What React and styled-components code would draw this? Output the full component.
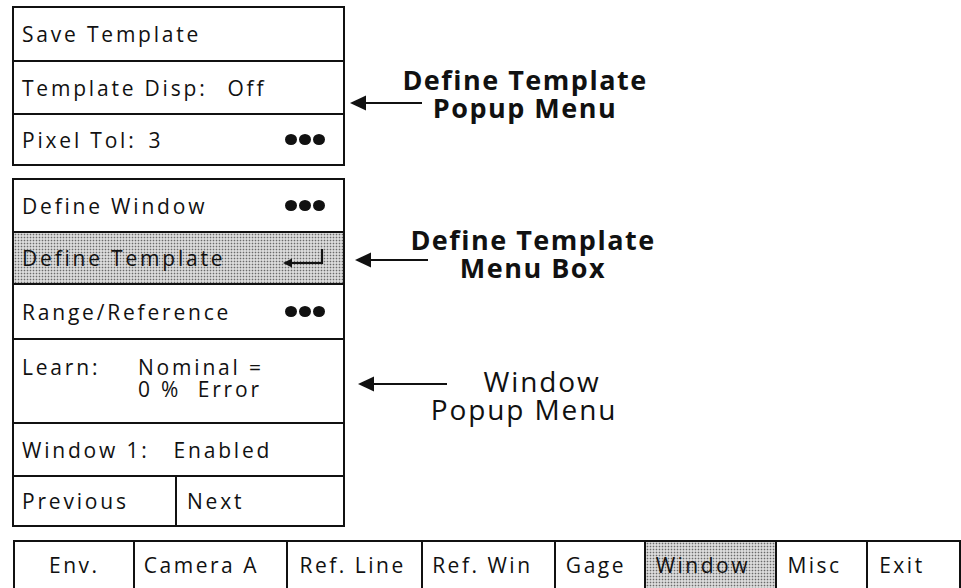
import React from "react";
import styled, { createGlobalStyle } from "styled-components";

const GlobalStyle = createGlobalStyle`
  html, body {
    margin: 0;
    padding: 0;
    background: #fff;
  }
  body {
    font-family: "Open Sans", "Noto Sans", sans-serif;
    color: #111;
  }
`;

const shade = `
  background-color: #dadada;
  background-image: radial-gradient(circle, #6a6a6a 0.7px, transparent 1.1px);
  background-size: 3px 3px;
`;

const Page = styled.div`
  width: 961px;
  height: 588px;
  overflow: hidden;
  display: flex;
  flex-direction: column;
  padding: 6px 0 0 12px;
  box-sizing: border-box;
`;

const Main = styled.div`
  display: flex;
`;

const MenuColumn = styled.div`
  width: 333px;
  display: flex;
  flex-direction: column;
  gap: 12px;
`;

const MenuBox = styled.div`
  border: 2px solid #111;
  display: flex;
  flex-direction: column;
`;

const Row = styled.div`
  height: ${(p) => p.$h}px;
  box-sizing: border-box;
  display: flex;
  align-items: center;
  justify-content: space-between;
  padding: 0 18px 0 8px;
  font-size: 21px;
  font-weight: 500;
  letter-spacing: 2.8px;
  white-space: pre;
  & + & {
    border-top: 2px solid #111;
  }
  ${(p) => p.$shaded && shade}
`;

const Field = styled.span`
  display: flex;
`;

const Value = styled.span`
  margin-left: ${(p) => p.$gap}px;
`;

const LearnGrid = styled.div`
  display: grid;
  grid-template-columns: 116px auto;
  line-height: 22px;
  margin-bottom: 6px;
`;

const SplitRow = styled(Row)`
  padding: 0;
  justify-content: flex-start;
`;

const SplitCell = styled.div`
  height: 100%;
  display: flex;
  align-items: center;
  padding-left: ${(p) => p.$pad}px;
  box-sizing: border-box;
  width: ${(p) => p.$w}px;
  & + & {
    border-left: 2px solid #111;
  }
`;

const Dots = styled.span`
  display: flex;
  gap: 2px;
`;

const Dot = styled.span`
  width: 12px;
  height: 11px;
  border-radius: 50%;
  background: #111;
`;

const Notes = styled.div`
  display: flex;
  flex-direction: column;
`;

const Callout = styled.div`
  display: flex;
  align-items: flex-start;
  margin-top: ${(p) => p.$top}px;
  margin-left: ${(p) => p.$left}px;
`;

const Pointer = styled.svg`
  flex: none;
  margin-top: ${(p) => p.$y}px;
`;

const Label = styled.div`
  width: 270px;
  margin-left: ${(p) => p.$shift}px;
  text-align: center;
  font-size: ${(p) => (p.$bold ? 27 : 28)}px;
  font-weight: ${(p) => (p.$bold ? 700 : 400)};
  letter-spacing: ${(p) => (p.$bold ? 1.5 : 1.9)}px;
  line-height: 28px;
`;

const LabelLine = styled.div`
  padding-left: ${(p) => p.$indent || 0}px;
`;

const TabBar = styled.div`
  margin: 13px 0 0 1px;
  height: 48px;
  display: flex;
  border-top: 2px solid #111;
  border-right: 2px solid #111;
`;

const Tab = styled.div`
  width: ${(p) => p.$w}px;
  box-sizing: border-box;
  border-left: 2px solid #111;
  padding-left: ${(p) => p.$pad}px;
  display: flex;
  align-items: center;
  font-size: 21px;
  font-weight: 500;
  letter-spacing: 2.5px;
  ${(p) => p.$active && shade}
`;

function ThreeDots() {
  return (
    <Dots>
      <Dot />
      <Dot />
      <Dot />
    </Dots>
  );
}

function ReturnArrow() {
  return (
    <svg width="42" height="20" viewBox="0 0 42 20">
      <path d="M8 15 H39 V1" fill="none" stroke="#111" strokeWidth="2.2" />
      <path d="M0 15 L9 10.5 L9 19.5 Z" fill="#111" />
    </svg>
  );
}

function LeftArrow({ length, y }) {
  return (
    <Pointer $y={y} width={length} height="16" viewBox={`0 0 ${length} 16`}>
      <path d={`M14 8 H${length}`} stroke="#111" strokeWidth="2.2" />
      <path d="M0 8 L16 0.5 L16 15.5 Z" fill="#111" />
    </Pointer>
  );
}

const tabs = [
  { name: "Env.", w: 120, pad: 34 },
  { name: "Camera A", w: 154, pad: 9 },
  { name: "Ref. Line", w: 135, pad: 11 },
  { name: "Ref. Win", w: 133, pad: 9 },
  { name: "Gage", w: 90, pad: 10 },
  { name: "Window", w: 132, pad: 10, active: true },
  { name: "Misc", w: 91, pad: 10 },
  { name: "Exit", w: 93, pad: 11 },
];

export default function App() {
  return (
    <>
      <GlobalStyle />
      <Page>
        <Main>
          <MenuColumn>
            <MenuBox>
              <Row $h={52}>Save Template</Row>
              <Row $h={53}>
                <Field>
                  Template Disp:<Value $gap={20}>Off</Value>
                </Field>
              </Row>
              <Row $h={51}>
                <Field>
                  Pixel Tol:<Value $gap={12}>3</Value>
                </Field>
                <ThreeDots />
              </Row>
            </MenuBox>
            <MenuBox>
              <Row $h={51}>
                Define Window
                <ThreeDots />
              </Row>
              <Row $h={52} $shaded>
                Define Template
                <ReturnArrow />
              </Row>
              <Row $h={55}>
                Range/Reference
                <ThreeDots />
              </Row>
              <Row $h={84}>
                <LearnGrid>
                  <span>Learn:</span>
                  <span>Nominal =</span>
                  <span />
                  <span>0 %  Error</span>
                </LearnGrid>
              </Row>
              <Row $h={53}>
                <Field>
                  Window 1:<Value $gap={24}>Enabled</Value>
                </Field>
              </Row>
              <SplitRow $h={50}>
                <SplitCell $w={161} $pad={8}>Previous</SplitCell>
                <SplitCell $w={168} $pad={10}>Next</SplitCell>
              </SplitRow>
            </MenuBox>
          </MenuColumn>
          <Notes>
            <Callout $top={60} $left={5}>
              <LeftArrow length={72} y={29} />
              <Label $bold $shift={-32}>
                <LabelLine>Define Template</LabelLine>
                <LabelLine>Popup Menu</LabelLine>
              </Label>
            </Callout>
            <Callout $top={104} $left={10}>
              <LeftArrow length={73} y={26} />
              <Label $bold $shift={-30}>
                <LabelLine>Define Template</LabelLine>
                <LabelLine>Menu Box</LabelLine>
              </Label>
            </Callout>
            <Callout $top={85} $left={13}>
              <LeftArrow length={89} y={9} />
              <Label $shift={-58}>
                <LabelLine $indent={36}>Window</LabelLine>
                <LabelLine>Popup Menu</LabelLine>
              </Label>
            </Callout>
          </Notes>
        </Main>
        <TabBar>
          {tabs.map((t) => (
            <Tab key={t.name} $w={t.w} $pad={t.pad} $active={t.active}>
              {t.name}
            </Tab>
          ))}
        </TabBar>
      </Page>
    </>
  );
}
